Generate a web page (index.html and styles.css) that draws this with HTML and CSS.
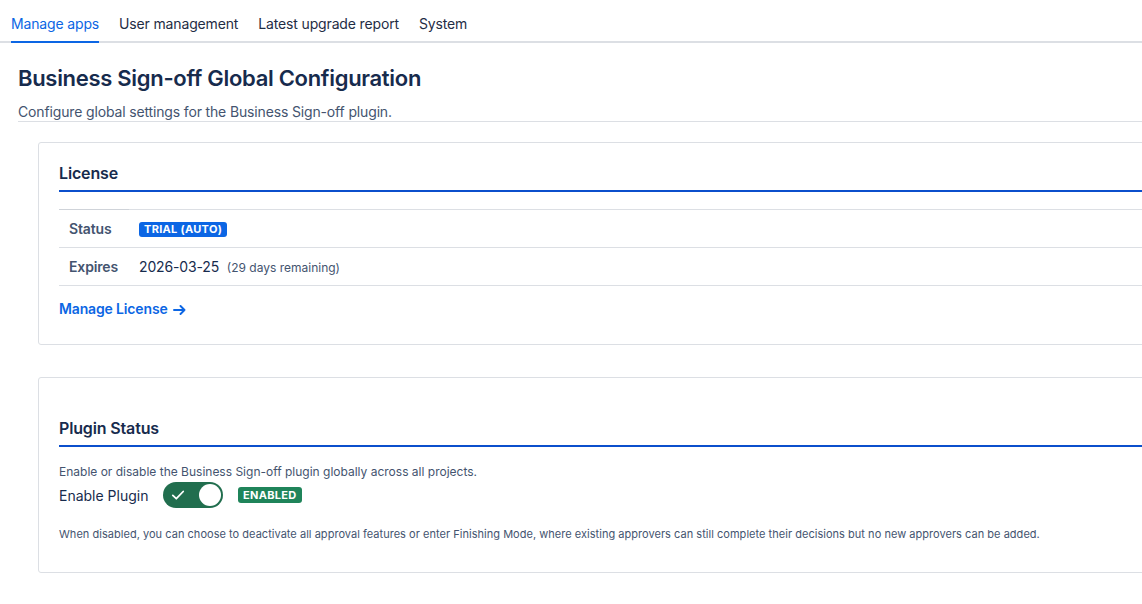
FILE: index.html
```html
<!DOCTYPE html>
<html lang="en">
<head>
    <meta charset="UTF-8">
    <meta name="viewport" content="width=device-width, initial-scale=1.0">
    <title>Business Sign-off Global Configuration</title>
    <link rel="stylesheet" href="styles.css">
</head>
<body>
    <nav class="tabs">
        <a href="#" class="tab active">Manage apps</a>
        <a href="#" class="tab">User management</a>
        <a href="#" class="tab">Latest upgrade report</a>
        <a href="#" class="tab">System</a>
    </nav>

    <main class="content">
        <header class="page-header">
            <h1>Business Sign-off Global Configuration</h1>
            <p>Configure global settings for the Business Sign-off plugin.</p>
        </header>

        <section class="card">
            <h2 class="card-title">License</h2>
            <table class="info-table">
                <tr>
                    <th>Status</th>
                    <td><span class="lozenge blue">Trial (Auto)</span></td>
                </tr>
                <tr>
                    <th>Expires</th>
                    <td>2026-03-25 <span class="muted">(29 days remaining)</span></td>
                </tr>
            </table>
            <a href="#" class="link">Manage License
                <svg class="arrow" width="13" height="10" viewBox="0 0 13 10"><path d="M1 5 H11.5 M7.5 1 L11.5 5 L7.5 9" fill="none" stroke="#0c66e4" stroke-width="1.9" stroke-linecap="round" stroke-linejoin="round"/></svg>
            </a>
        </section>

        <section class="card card-plugin">
            <h2 class="card-title">Plugin Status</h2>
            <p class="desc">Enable or disable the Business Sign-off plugin globally across all projects.</p>
            <div class="toggle-row">
                <span class="toggle-label">Enable Plugin</span>
                <span class="toggle">
                    <svg width="14" height="14" viewBox="0 0 14 14"><path d="M1.8 7.4 L5.3 10.7 L12.2 3.5" fill="none" stroke="#fff" stroke-width="1.8" stroke-linecap="round" stroke-linejoin="round"/></svg>
                    <span class="knob"></span>
                </span>
                <span class="lozenge green">Enabled</span>
            </div>
            <p class="note">When disabled, you can choose to deactivate all approval features or enter Finishing Mode, where existing approvers can still complete their decisions but no new approvers can be added.</p>
        </section>
    </main>
</body>
</html>
```

FILE: styles.css
```css
html, body {
    overflow-x: hidden;
}
body {
    margin: 0;
    padding: 0;
    background: #fff;
    color: #172b4d;
    font-family: Inter, "Noto Sans", sans-serif;
    font-size: 14px;
    letter-spacing: -0.15px;
}
.tabs {
    display: flex;
    gap: 20px;
    padding-left: 11px;
    height: 41px;
    border-bottom: 2px solid #dcdfe4;
}
.tab {
    display: flex;
    align-items: center;
    padding-top: 6px;
    color: #1f2d45;
    text-decoration: none;
    font-size: 14px;
    letter-spacing: -0.15px;
    border-bottom: 2px solid transparent;
    margin-bottom: -2px;
}
.tab.active {
    color: #0c66e4;
    border-bottom-color: #0c66e4;
}
.content {
    padding: 0 0 0 18px;
}
.page-header h1 {
    margin: 21px 0 11px;
    font-size: 22px;
    line-height: 28px;
    font-weight: 600;
    letter-spacing: -0.3px;
}
.page-header p {
    margin: 0;
    line-height: 18px;
    color: #44546f;
    border-bottom: 1px solid #dcdfe4;
}
.card {
    margin: 20px -40px 0 20px;
    border: 1px solid #dcdfe4;
    border-radius: 3px;
    padding: 20px 0 25px 20px;
}
.card-plugin {
    margin-top: 32px;
    padding-top: 40px;
    padding-bottom: 30px;
}
.card-title {
    margin: 0;
    font-size: 16px;
    line-height: 20px;
    font-weight: 600;
    padding-bottom: 7px;
    border-bottom: 2px solid #0b4fcc;
}
.info-table {
    width: 100%;
    border-collapse: collapse;
    margin-top: 17px;
}
.info-table th, .info-table td {
    height: 37px;
    padding: 0 10px;
    text-align: left;
    border-top: 1px solid #dcdfe4;
    border-bottom: 1px solid #dcdfe4;
}
.info-table th {
    width: 50px;
    color: #44546f;
    font-weight: 600;
    border-top-color: #cfd3d9;
}
.muted {
    margin-left: 4px;
    font-size: 12px;
    color: #44546f;
    letter-spacing: 0;
}
.lozenge {
    display: inline-block;
    padding: 0 5px;
    border-radius: 3px;
    color: #fff;
    font-size: 11px;
    font-weight: 700;
    line-height: 15px;
    text-transform: uppercase;
    letter-spacing: 0.3px;
}
.lozenge.blue {
    background: #0c66e4;
    position: relative;
    top: -1px;
}
.lozenge.green {
    background: #1f845a;
    line-height: 16px;
}
.link {
    display: inline-flex;
    align-items: center;
    gap: 5px;
    margin-top: 13px;
    color: #0c66e4;
    font-weight: 600;
    text-decoration: none;
    line-height: 20px;
}
.arrow {
    margin-top: 1px;
}
.desc {
    margin: 17px 0 0;
    font-size: 12px;
    line-height: 16px;
    color: #44546f;
    letter-spacing: 0;
}
.toggle-row {
    display: flex;
    align-items: center;
    margin-top: 2px;
    height: 26px;
}
.toggle-label {
    font-size: 14px;
    width: 104px;
    letter-spacing: 0;
}
.toggle {
    display: flex;
    align-items: center;
    justify-content: space-between;
    width: 60px;
    height: 26px;
    box-sizing: border-box;
    padding: 0 2px 0 8px;
    border-radius: 13px;
    background: #216e4e;
    margin-right: 15px;
}
.knob {
    width: 22px;
    height: 22px;
    border-radius: 50%;
    background: #fff;
}
.note {
    margin: 18px 0 0;
    font-size: 11px;
    line-height: 16px;
    color: #44546f;
    letter-spacing: 0.03px;
}
```
